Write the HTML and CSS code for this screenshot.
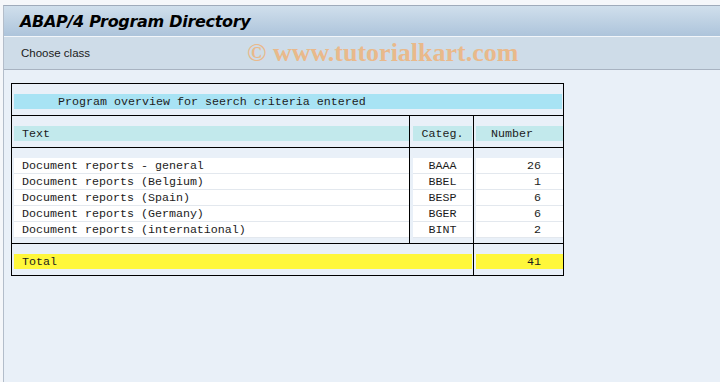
FILE: index.html
```html
<!DOCTYPE html>
<html>
<head lang="en">
    <meta charset="UTF-8">
    <title>ABAP/4 Program Directory</title>
    <link rel="stylesheet" href="styles.css">
</head>
<body>

<div class="window">
    <header class="titlebar">
        <h1>ABAP/4 Program Directory</h1>
    </header>
    <nav class="toolbar">
        <span class="btn">Choose class</span>
        <span class="mark">&copy; www.tutorialkart.com</span>
    </nav>
    <main class="content">
        <div class="list">
            <section class="block">
                <div class="bar cyan title">Program overview for seerch criteria entered</div>
            </section>
            <section class="block cols head">
                <div class="col c1"><div class="bar teal">Text</div></div>
                <div class="col c2"><div class="bar teal center">Categ.</div></div>
                <div class="col c3"><div class="bar teal num-head">Number</div></div>
            </section>
            <section class="block cols">
                <div class="col c1">
                    <div class="bar row">Document reports - general</div>
                    <div class="bar row">Document reports (Belgium)</div>
                    <div class="bar row">Document reports (Spain)</div>
                    <div class="bar row">Document reports (Germany)</div>
                    <div class="bar row">Document reports (international)</div>
                </div>
                <div class="col c2">
                    <div class="bar row center">BAAA</div>
                    <div class="bar row center">BBEL</div>
                    <div class="bar row center">BESP</div>
                    <div class="bar row center">BGER</div>
                    <div class="bar row center">BINT</div>
                </div>
                <div class="col c3">
                    <div class="bar row num">26</div>
                    <div class="bar row num">1</div>
                    <div class="bar row num">6</div>
                    <div class="bar row num">6</div>
                    <div class="bar row num">2</div>
                </div>
            </section>
            <section class="block cols head last">
                <div class="col c12"><div class="bar yellow">Total</div></div>
                <div class="col c3"><div class="bar yellow num">41</div></div>
            </section>
        </div>
    </main>
</div>

</body>
</html>
```

FILE: styles.css
```css
* {
    box-sizing: border-box;
}
body {
    margin: 0;
    background-color: #f5f7fa;
    overflow: hidden;
}
.window {
    margin: 5px 0 0 3px;
    height: 377px;
    border-top: 1px solid #9fabbb;
    border-left: 1px solid #b3bdca;
    background-color: #e9f0f8;
}
.titlebar {
    height: 31px;
    border-bottom: 1px solid #f2f6fa;
    background: linear-gradient(#d0dfec, #adc4db);
    display: flex;
    align-items: center;
}
h1 {
    margin: 0 0 0 16px;
    font-family: "DejaVu Sans", sans-serif;
    font-size: 16px;
    font-weight: bold;
    font-style: italic;
    color: #000;
    letter-spacing: -0.3px;
}
.toolbar {
    position: relative;
    height: 33px;
    border-bottom: 1px solid #a8b3c1;
    background-color: #cedce8;
    display: flex;
    align-items: center;
}
.btn {
    margin-left: 17px;
    font-family: "Liberation Sans", sans-serif;
    font-size: 11.5px;
    color: #1a1a1a;
}
.mark {
    position: absolute;
    left: 243px;
    top: 1px;
    font-family: "Liberation Serif", serif;
    font-size: 26px;
    font-weight: bold;
    color: #e9b98b;
}
.content {
    padding: 13px 0 0 7px;
}
.list {
    width: 553px;
    border: 1px solid #000;
    font-family: "Liberation Mono", monospace;
    font-size: 11.67px;
    color: #1c1c1c;
}
.block {
    border-bottom: 1px solid #000;
}
.block.last {
    border-bottom: none;
}
.block:first-child {
    padding: 10px 1px 6px 2px;
}
.cols {
    display: flex;
}
.col {
    padding: 10px 0 5px 0;
    border-right: 1px solid #000;
}
.head .col {
    padding-bottom: 6px;
}
.c1 {
    width: 398px;
    padding-left: 2px;
}
.c2 {
    width: 64px;
    padding-left: 3px;
    padding-right: 1px;
}
.c12 {
    width: 462px;
    padding-left: 2px;
    padding-right: 1px;
}
.c3 {
    width: 89px;
    padding-left: 2px;
    border-right: none;
}
.bar {
    height: 15px;
    line-height: 15px;
    padding-top: 1px;
    padding-left: 8px;
    white-space: pre;
}
.cyan {
    background-color: #a8e3f4;
}
.title {
    padding-left: 44px;
}
.teal {
    background-color: #c2e9ec;
}
.row {
    height: 16px;
    border-bottom: 1px solid #e3e8ee;
    background-color: #fff;
}
.yellow {
    background-color: #fff73b;
}
.center {
    padding-left: 0;
    text-align: center;
}
.num-head {
    padding-left: 15px;
}
.num {
    padding-left: 0;
    padding-right: 22px;
    text-align: right;
}
```
